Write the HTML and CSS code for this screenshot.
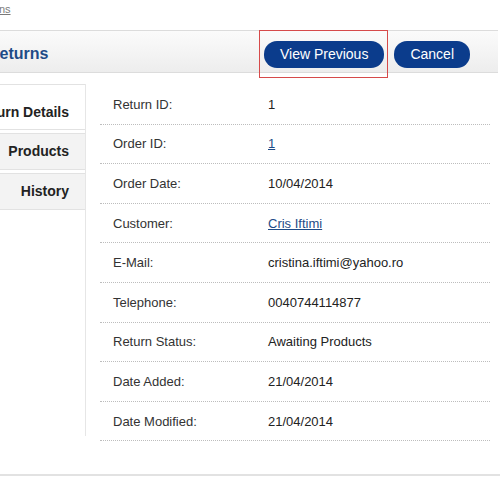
FILE: index.html
```html
<!DOCTYPE html>
<html lang="en">
<head>
  <meta charset="UTF-8">
  <title>Returns</title>
  <link rel="stylesheet" href="styles.css">
</head>
<body>
  <div class="page">
    <div class="breadcrumb"><a href="#">Returns</a></div>
    <div class="heading">
      <h1>Returns</h1>
      <div class="buttons">
        <a class="button marked" href="#">View Previous</a>
        <a class="button" href="#">Cancel</a>
      </div>
    </div>
    <div class="content">
      <div class="tabs">
        <a class="tab selected" href="#">Return Details</a>
        <a class="tab" href="#">Products</a>
        <a class="tab" href="#">History</a>
      </div>
      <div class="form">
        <div class="row"><span class="label">Return ID:</span><span>1</span></div>
        <div class="row"><span class="label">Order ID:</span><a href="#">1</a></div>
        <div class="row"><span class="label">Order Date:</span><span>10/04/2014</span></div>
        <div class="row"><span class="label">Customer:</span><a href="#">Cris Iftimi</a></div>
        <div class="row"><span class="label">E-Mail:</span><span>cristina.iftimi@yahoo.ro</span></div>
        <div class="row"><span class="label">Telephone:</span><span>0040744114877</span></div>
        <div class="row"><span class="label">Return Status:</span><span>Awaiting Products</span></div>
        <div class="row"><span class="label">Date Added:</span><span>21/04/2014</span></div>
        <div class="row"><span class="label">Date Modified:</span><span>21/04/2014</span></div>
      </div>
    </div>
  </div>
  <div class="footer-line"></div>
</body>
</html>
```

FILE: styles.css
```css
* {
  margin: 0;
  padding: 0;
  box-sizing: border-box;
}
body {
  font-family: Arial, "Liberation Sans", sans-serif;
  font-size: 13px;
  color: #222;
  background: #fff;
  overflow: hidden;
}
.page {
  margin-left: -40px;
  width: 538px;
}
.breadcrumb {
  height: 30px;
  padding: 3px 0 0 12px;
  font-size: 11px;
}
.breadcrumb a {
  color: #7a7a7a;
}
.heading {
  display: flex;
  align-items: center;
  justify-content: space-between;
  height: 43px;
  border-top: 1px solid #dcdcdc;
  border-bottom: 1px solid #dcdcdc;
  background: linear-gradient(#fbfbfb, #ededed);
  padding: 5px 28px 0 28px;
}
.heading h1 {
  font-size: 16px;
  color: #1e4b87;
  font-weight: bold;
}
.buttons {
  display: flex;
  gap: 10px;
}
.button {
  display: inline-block;
  height: 27px;
  line-height: 27px;
  padding: 0 16px;
  border-radius: 13px;
  background: #0b3c8c;
  color: #fff;
  font-size: 14px;
  text-decoration: none;
}
.button.marked {
  position: relative;
}
.button.marked::after {
  content: "";
  position: absolute;
  top: -11px;
  right: -4px;
  bottom: -10px;
  left: -5px;
  border: 1px solid #d64a4a;
}
.content {
  display: flex;
  gap: 14px;
  padding-top: 11px;
}
.tabs {
  width: 126px;
  display: flex;
  flex-direction: column;
  gap: 3px;
  min-height: 352px;
  border-right: 1px solid #e6e6e6;
  align-self: flex-start;
}
.tab {
  display: block;
  text-align: right;
  padding-right: 16px;
  font-size: 14px;
  font-weight: bold;
  color: #222;
  text-decoration: none;
  background: #f3f3f3;
  border-top: 1px solid #e2e2e2;
  border-bottom: 1px solid #e2e2e2;
  height: 37px;
  line-height: 35px;
}
.tab.selected {
  background: #fff;
  height: 46px;
  padding-top: 10px;
  line-height: 34px;
}
.form {
  width: 390px;
  margin-top: 1px;
}
.row {
  display: flex;
  align-items: center;
  height: 39.6px;
  border-bottom: 1px dotted #bdbdbd;
  color: #222;
}
.row .label {
  width: 168px;
  padding-left: 13px;
  color: #333;
}
.row a {
  color: #1e4b87;
}
.footer-line {
  margin-top: 33px;
  height: 2px;
  background: #e2e2e2;
}
```
